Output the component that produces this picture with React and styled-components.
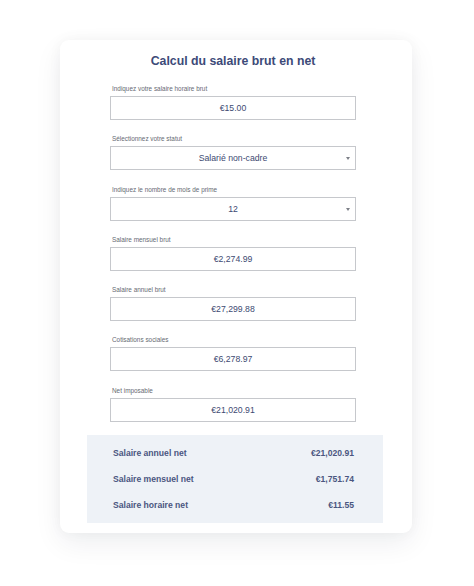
import React from "react";
import styled, { createGlobalStyle } from "styled-components";

const GlobalStyle = createGlobalStyle`
  body {
    margin: 0;
    background: #ffffff;
    font-family: "Liberation Sans", Arial, sans-serif;
  }
`;

const Page = styled.div`
  width: 474px;
  height: 586px;
  padding-top: 40px;
  box-sizing: border-box;
`;

const Card = styled.div`
  width: 352px;
  height: 493px;
  margin-left: 60px;
  box-sizing: border-box;
  padding-top: 13px;
  background: #ffffff;
  border-radius: 9px;
  box-shadow: 0 10px 28px rgba(20, 30, 60, 0.07), 0 0 14px rgba(20, 30, 60, 0.04);
  display: flex;
  flex-direction: column;
`;

const Title = styled.h1`
  margin: 0;
  font-size: 12.3px;
  line-height: 16px;
  font-weight: 700;
  color: #3d4a78;
  text-align: center;
  padding-right: 6px;
`;

const Form = styled.div`
  width: 246px;
  margin: 16px 0 0 50px;
  display: flex;
  flex-direction: column;
  gap: 15.3px;
`;

const Field = styled.div`
  display: flex;
  flex-direction: column;
`;

const Label = styled.label`
  font-size: 6.4px;
  line-height: 8px;
  color: #666a73;
  margin: 0 0 3px 2px;
`;

const Box = styled.div`
  position: relative;
  height: 24px;
  box-sizing: border-box;
  border: 1px solid #c6c8cc;
  display: flex;
  align-items: center;
  justify-content: center;
  font-size: 8.7px;
  color: #3d4a72;
`;

const Caret = styled.span`
  position: absolute;
  right: 5px;
  top: 10px;
  width: 0;
  height: 0;
  border-left: 2.5px solid transparent;
  border-right: 2.5px solid transparent;
  border-top: 3px solid #7d8088;
`;

const Summary = styled.div`
  margin: 13px 29px 0 27px;
  padding: 5px 29px 5px 26px;
  background: #eef2f7;
  display: flex;
  flex-direction: column;
`;

const Row = styled.div`
  height: 26px;
  display: flex;
  align-items: center;
  justify-content: space-between;
  font-size: 8.6px;
  font-weight: 700;
  color: #4a5680;
`;

const fields = [
  { label: "Indiquez votre salaire horaire brut", value: "€15.00" },
  { label: "Sélectionnez votre statut", value: "Salarié non-cadre", select: true },
  { label: "Indiquez le nombre de mois de prime", value: "12", select: true },
  { label: "Salaire mensuel brut", value: "€2,274.99" },
  { label: "Salaire annuel brut", value: "€27,299.88" },
  { label: "Cotisations sociales", value: "€6,278.97" },
  { label: "Net imposable", value: "€21,020.91" },
];

const results = [
  { label: "Salaire annuel net", value: "€21,020.91" },
  { label: "Salaire mensuel net", value: "€1,751.74" },
  { label: "Salaire horaire net", value: "€11.55" },
];

const App = () => (
  <>
    <GlobalStyle />
    <Page>
      <Card>
        <Title>Calcul du salaire brut en net</Title>
        <Form>
          {fields.map((f) => (
            <Field key={f.label}>
              <Label>{f.label}</Label>
              <Box>
                {f.value}
                {f.select && <Caret />}
              </Box>
            </Field>
          ))}
        </Form>
        <Summary>
          {results.map((r) => (
            <Row key={r.label}>
              <span>{r.label}</span>
              <span>{r.value}</span>
            </Row>
          ))}
        </Summary>
      </Card>
    </Page>
  </>
);

export default App;
